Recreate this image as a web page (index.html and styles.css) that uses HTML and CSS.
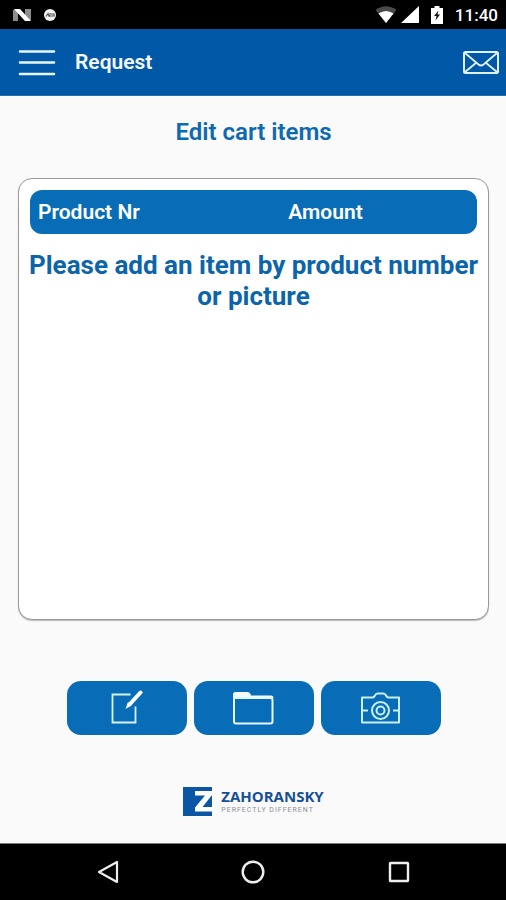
FILE: index.html
```html
<!DOCTYPE html>
<html lang="en">
<head>
<meta charset="utf-8">
<meta name="viewport" content="width=device-width, initial-scale=1">
<title>Request</title>
<link rel="stylesheet" href="styles.css">
</head>
<body>
<div class="screen">
  <div class="status-bar">
    <div class="status-group">
      <svg class="notif" width="18" height="14" viewBox="0 0 18 14" aria-hidden="true">
        <path d="M0 2l5-1v12H0zM12 1h6v11l-6 1z" fill="#8c8c8c"/>
        <path d="M1 1h6l11 12h-6z" fill="#fff"/>
      </svg>
      <svg width="14" height="14" viewBox="0 0 14 14" aria-hidden="true">
        <circle cx="7" cy="7" r="6" fill="#f4f4f4"/>
        <path d="M3 8.500l2-3 1 3M7 5v4M8 6h3v2H8" fill="none" stroke="#555" stroke-width="1.200"/>
      </svg>
    </div>
    <div class="status-group">
      <svg width="22" height="18" viewBox="0 0 22 18" aria-hidden="true">
        <path d="M0.500 4Q11-3.500 21.500 4L11 17z" fill="#4a4a4a"/>
        <path d="M3.500 7.500Q11 2.500 18.500 7.500L11 17z" fill="#fff"/>
      </svg>
      <svg class="signal" width="18" height="18" viewBox="0 0 18 18" aria-hidden="true"><path d="M18 0v17H0z" fill="#fff"/></svg>
      <svg class="battery" width="12" height="18" viewBox="0 0 12 18" aria-hidden="true">
        <path d="M0 2h3.500V0h5v2H12v16H0z" fill="#fff"/>
        <path d="M7.500 4.500L3 10h2.500L4.500 14.500 9 8.500H6.500z" fill="#111"/>
      </svg>
      <time class="clock">11:40</time>
    </div>
  </div>

  <header class="app-bar">
    <button class="icon-button" type="button" aria-label="Menu">
      <svg width="38" height="28" viewBox="0 0 38 28"><path d="M2 3.500h34M2 14.500h34M2 26h34" fill="none" stroke="#e8f6ff" stroke-width="2.600" stroke-linecap="round"/></svg>
    </button>
    <h1 class="app-title">Request</h1>
    <button class="icon-button" type="button" aria-label="Send request">
      <svg width="38" height="26" viewBox="0 0 38 26" fill="none" stroke="#e0f2ff" stroke-linejoin="round">
        <rect x="2" y="3" width="34" height="21" rx="1.500" stroke-width="2"/>
        <path d="M3 4l13.500 11.500q2.500 2 5 0L35 4M3 23l11.500-9.500M35 23L23.500 13.500" stroke-width="1.800"/>
      </svg>
    </button>
  </header>

  <main class="content">
    <h2 class="page-title">Edit cart items</h2>
    <section class="card">
      <table class="cart">
        <thead><tr><th scope="col">Product Nr</th><th scope="col">Amount</th></tr></thead>
      </table>
      <p class="empty-message">Please add an item by product number or picture</p>
    </section>
    <div class="actions">
      <button class="action" type="button" aria-label="Enter product number">
        <svg width="40" height="36" viewBox="0 0 40 36" fill="none">
          <path d="M23.500 4.500h-18v28h23V16.500" stroke="#d8f2fc" stroke-width="1.800"/>
          <path d="M33.500 2.500L22.500 14.500" stroke="#fff" stroke-width="4" stroke-linecap="round"/>
          <path d="M21 12l3.500 3.500-6 3.500z" fill="#fff"/>
        </svg>
      </button>
      <button class="action" type="button" aria-label="Choose picture">
        <svg width="42" height="36" viewBox="0 0 42 36">
          <path d="M0 8V4.500Q0 2 2.500 2h12q2 0 3 2l.5 1.500H38q2.500 0 2.500 2.500z" fill="#f2fbff"/>
          <path d="M1 8h36q2.500 0 2.500 2v21.500q0 2-2 2H3q-2 0-2-2z" fill="#086db6" stroke="#e4f6ff" stroke-width="2"/>
        </svg>
      </button>
      <button class="action" type="button" aria-label="Take picture">
        <svg width="42" height="36" viewBox="0 0 42 36" fill="none" stroke="#c8f0fc" stroke-width="2" stroke-linejoin="round">
          <path d="M2 7.500h10.500q1.500 0 2.500-2t2.500-2h6q1.500 0 2.500 2t2.500 2H39v25H2zM2 20.500h6M39 20.500h-6"/>
          <circle cx="20.500" cy="20.500" r="8.500"/>
          <circle cx="20.500" cy="20.500" r="4"/>
        </svg>
      </button>
    </div>
    <div class="brand">
      <svg width="29" height="29" viewBox="0 0 29 29" aria-hidden="true">
        <path d="M0 0h29v29H0z" fill="#0b56a4"/>
        <path d="M12 4h17v4L19.500 20H29v4.500H12V20.500L22 8.500H12z" fill="#fff"/>
      </svg>
      <div>
        <div class="brand-name">ZAHORANSKY</div>
        <div class="brand-claim">PERFECTLY DIFFERENT</div>
      </div>
    </div>
  </main>

  <nav class="nav-bar" aria-label="System">
    <button class="nav-button" type="button" aria-label="Back">
      <svg width="24" height="24" viewBox="0 0 24 24"><path d="M22 2v20L4 12z" fill="none" stroke="#eee" stroke-width="2.200" stroke-linejoin="round"/></svg>
    </button>
    <button class="nav-button" type="button" aria-label="Home">
      <svg width="24" height="24" viewBox="0 0 24 24"><circle cx="12" cy="12" r="10.300" fill="none" stroke="#eee" stroke-width="2.400"/></svg>
    </button>
    <button class="nav-button" type="button" aria-label="Recent apps">
      <svg width="24" height="24" viewBox="0 0 24 24"><rect x="3" y="3" width="18" height="18" rx="0.500" fill="none" stroke="#eee" stroke-width="2.400"/></svg>
    </button>
  </nav>
</div>
</body>
</html>
```

FILE: styles.css
```css
* {
  box-sizing: border-box;
}

body {
  margin: 0;
  background: #fafafa;
  font-family: Roboto, "Liberation Sans", sans-serif;
}

h1, h2, p {
  margin: 0;
}

svg {
  display: block;
}

button {
  display: flex;
  align-items: center;
  justify-content: center;
  padding: 0;
  border: 0;
  background: none;
  cursor: pointer;
}

.screen {
  display: flex;
  flex-direction: column;
  min-height: 100vh;
}

.status-bar {
  display: flex;
  align-items: center;
  justify-content: space-between;
  height: 29px;
  padding: 0 8px 0 13px;
  background: #000;
  color: #fff;
}

.status-group {
  display: flex;
  align-items: center;
}

.notif {
  margin-right: 12px;
}

.signal {
  margin-left: 4px;
}

.battery {
  margin: 0 12px;
}

.clock {
  font-size: 17px;
  font-weight: 500;
  line-height: 28px;
}

.app-bar {
  display: flex;
  align-items: center;
  height: 67px;
  padding: 0 6px 0 18px;
  border-bottom: 1px solid #2870b4;
  background: #0158a6;
}

.app-title {
  flex: 1;
  margin-left: 19px;
  color: #f4faff;
  font-size: 21px;
  font-weight: 600;
  line-height: 28px;
}

.content {
  display: flex;
  flex: 1;
  flex-direction: column;
  padding: 20px 17px 27px 18px;
}

.page-title {
  color: #0d69b0;
  font-size: 24px;
  font-weight: 600;
  line-height: 32px;
  text-align: center;
}

.card {
  flex: 1;
  margin-top: 30px;
  padding: 11px 5px;
  border: 1px solid #999;
  border-radius: 14px;
  background: #fff;
  box-shadow: 0 1px 1px #bbb;
}

.cart {
  width: calc(100% - 12px);
  margin: 0 6px;
  border-spacing: 0;
  table-layout: fixed;
}

.cart th {
  width: 44%;
  height: 44px;
  padding: 0 8px;
  background: #086db6;
  color: #fff;
  font-size: 21px;
  font-weight: 600;
  line-height: 28px;
  text-align: left;
}

.cart th:first-child {
  width: 56%;
  border-radius: 12px 0 0 12px;
}

.cart th:last-child {
  border-radius: 0 12px 12px 0;
}

.empty-message {
  margin-top: 16px;
  color: #0c65aa;
  font-size: 26px;
  font-weight: 700;
  line-height: 31px;
  text-align: center;
}

.actions {
  display: flex;
  justify-content: center;
  gap: 7px;
  margin-top: 61px;
}

.action {
  width: 120px;
  height: 54px;
  border-radius: 14px;
  background: #086db6;
}

.brand {
  display: flex;
  align-items: center;
  justify-content: center;
  gap: 9px;
  margin-top: 52px;
}

.brand-name {
  color: #164f97;
  font-family: "Open Sans", Roboto, sans-serif;
  font-size: 15px;
  font-weight: 700;
  line-height: 17px;
}

.brand-claim {
  color: #8a8f98;
  font-size: 7px;
  letter-spacing: 1px;
  line-height: 11px;
}

.nav-bar {
  display: flex;
  align-items: center;
  justify-content: center;
  gap: 98px;
  height: 57px;
  border-top: 1px solid #777;
  background: #000;
}

.nav-button {
  width: 48px;
  height: 48px;
}
```
